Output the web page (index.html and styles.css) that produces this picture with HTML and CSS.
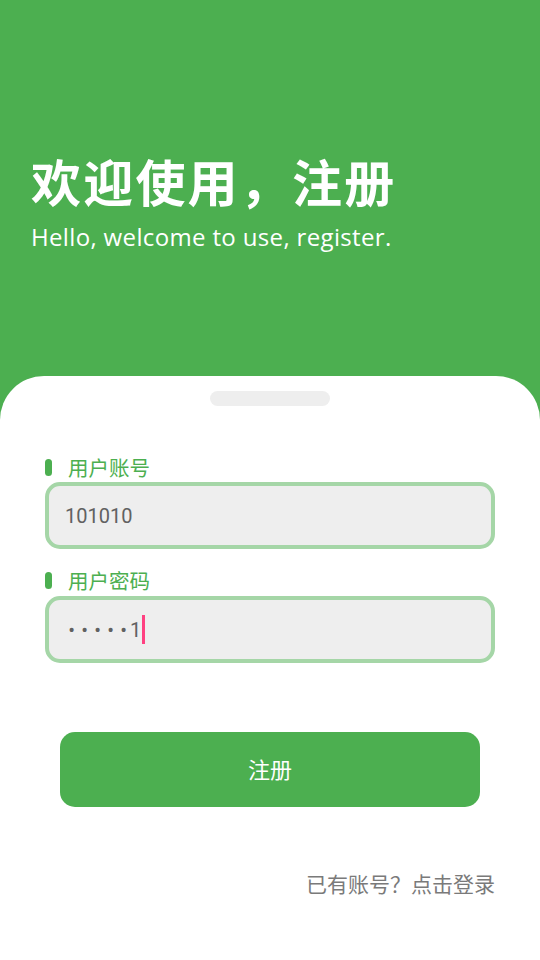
FILE: index.html
```html
<!DOCTYPE html>
<html lang="zh">
<head>
<meta charset="utf-8">
<link rel="stylesheet" href="styles.css">
</head>
<body>
<div class="page">
  <header class="hero">
    <h1 class="title">欢迎使用，注册</h1>
    <p class="subtitle">Hello, welcome to use, register.</p>
  </header>
  <main class="card">
    <div class="handle"></div>
    <div class="field">
      <div class="label"><span class="dot"></span><span>用户账号</span></div>
      <div class="input"><span class="value">101010</span></div>
    </div>
    <div class="field field-2">
      <div class="label"><span class="dot"></span><span>用户密码</span></div>
      <div class="input"><span class="value pw"><span class="bullet">•</span><span class="bullet">•</span><span class="bullet">•</span><span class="bullet">•</span><span class="bullet">•</span>1</span><span class="caret"></span></div>
    </div>
    <button class="btn">注册</button>
    <div class="login">已有账号？点击登录</div>
  </main>
</div>
</body>
</html>
```

FILE: styles.css
```css
* { box-sizing: border-box; }
html, body { margin: 0; padding: 0; }
body {
  width: 540px;
  height: 960px;
  overflow: hidden;
  background: #4caf50;
  font-family: "Noto Sans CJK SC", "Noto Sans", sans-serif;
}
.page {
  display: flex;
  flex-direction: column;
  height: 960px;
}
.hero {
  height: 376px;
  padding: 150px 31px 0;
  color: #fff;
}
.title {
  margin: 0;
  font-size: 50px;
  line-height: 60px;
  font-weight: 700;
  letter-spacing: 2.2px;
}
.subtitle {
  margin: 12px 0 0;
  font-family: "Open Sans", "Noto Sans", sans-serif;
  font-size: 24px;
  line-height: 30px;
  letter-spacing: 0.35px;
}
.card {
  flex: 1;
  background: #fff;
  border-radius: 44px 44px 0 0;
  padding: 15px 45px 0;
  display: flex;
  flex-direction: column;
}
.handle {
  align-self: center;
  width: 120px;
  height: 15px;
  border-radius: 8px;
  background: #eeeeee;
}
.field { margin-top: 47px; }
.field-2 { margin-top: 17px; }
.label {
  display: flex;
  align-items: center;
  gap: 16px;
  height: 28px;
  color: #4caf50;
  font-size: 20.5px;
  line-height: 28px;
}
.dot {
  width: 7px;
  height: 17px;
  border-radius: 4px;
  background: #4caf50;
}
.input {
  margin-top: 1px;
  height: 67px;
  border: 4px solid #a5d6a7;
  border-radius: 15px;
  background: #eeeeee;
  display: flex;
  align-items: center;
  padding: 0 16px;
  font-family: Roboto, "Noto Sans", sans-serif;
  font-size: 20px;
  color: #616161;
}
.field-2 .input { margin-top: 2px; }
.pw { display: flex; align-items: center; }
.bullet {
  display: inline-block;
  width: 13px;
  text-align: center;
  font-size: 20px;
}
.caret {
  width: 3px;
  height: 29px;
  background: #ff4081;
  margin-left: 1px;
}
.btn {
  margin: 69px 15px 0;
  height: 75px;
  padding: 0 0 4px;
  border: none;
  border-radius: 15px;
  background: #4caf50;
  color: #fff;
  font-family: "Noto Sans CJK SC", sans-serif;
  font-size: 22px;
}
.login {
  margin-top: 62px;
  text-align: right;
  font-size: 21px;
  line-height: 28px;
  color: #7a7a7a;
}
```
